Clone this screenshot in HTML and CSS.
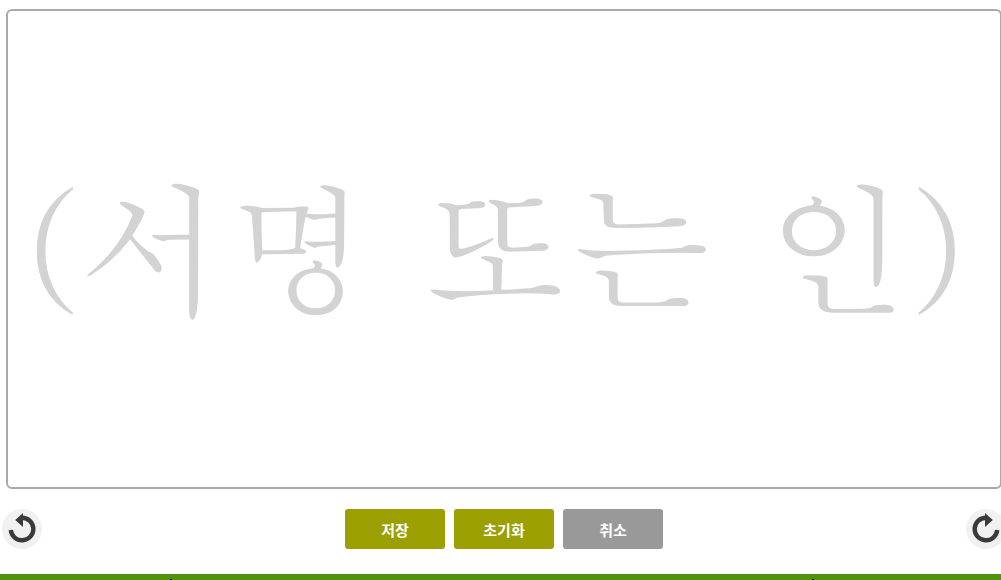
FILE: index.html
```html
<!DOCTYPE html>
<html lang="ko">
<head>
<meta charset="utf-8">
<title>서명</title>
<link rel="stylesheet" href="styles.css">
</head>
<body>
<main class="page">
  <section class="pad">
    <span class="hint">(서명 또는 인)</span>
  </section>
  <div class="toolbar">
    <button class="round" type="button" aria-label="실행 취소">
      <svg viewBox="0 0 40 40" class="round-icon"><path d="M20 8.7A11.3 11.3 0 1 1 8.8 21" class="arc"/><path d="M21 4V18L13.2 11Z" class="head"/></svg>
    </button>
    <div class="actions">
      <button class="btn btn-ok" type="button">저장</button>
      <button class="btn btn-ok" type="button">초기화</button>
      <button class="btn btn-off" type="button">취소</button>
    </div>
    <button class="round" type="button" aria-label="다시 실행">
      <svg viewBox="0 0 40 40" class="round-icon"><path d="M20 8.7A11.3 11.3 0 1 0 31.2 21" class="arc"/><path d="M19 4V18L26.8 11Z" class="head"/></svg>
    </button>
  </div>
  <footer class="strip"><i class="tick"></i><i class="tick"></i></footer>
</main>
</body>
</html>
```
FILE: styles.css
```css
html, body { margin: 0; padding: 0; background: #fff; }
body { width: 1001px; height: 580px; overflow: hidden; }
.page { display: flex; flex-direction: column; height: 580px; }
.pad {
  box-sizing: border-box;
  height: 480px;
  margin: 9px 0 0 6px;
  width: 996px;
  padding: 0 15px 15px 0;
  border: 2px solid #aaa;
  border-radius: 6px;
  display: flex;
  align-items: center;
  justify-content: center;
  overflow: hidden;
}
.hint {
  font-family: Batang, "Liberation Serif", serif;
  font-size: 144px;
  letter-spacing: 2px;
  line-height: 1;
  color: #d3d3d3;
  white-space: nowrap;
}
.toolbar {
  display: flex;
  justify-content: space-between;
  align-items: center;
  margin: 20px 0 0 2px;
  width: 1004px;
  height: 40px;
}
.actions { display: flex; gap: 9px; }
.round {
  width: 40px; height: 40px; padding: 0; border: 0;
  border-radius: 50%;
  background: #f1f1f1;
}
.round-icon { display: block; width: 40px; height: 40px; }
.arc { fill: none; stroke: #3a3a3a; stroke-width: 4.4; }
.head { fill: #3a3a3a; }
.btn {
  width: 100px; height: 40px; padding: 0; border: 0;
  border-radius: 3px;
  color: #fff;
  font: 700 15px "Noto Sans CJK KR", sans-serif;
}
.btn-ok { background: #9b9f00; }
.btn-off { background: #999; }
.strip {
  margin-top: 25px;
  height: 6px;
  background: #51930c;
  display: flex;
  padding-left: 170px;
  gap: 640px;
  align-items: flex-end;
}
.tick { display: block; width: 2px; height: 1px; background: #000; }
```
